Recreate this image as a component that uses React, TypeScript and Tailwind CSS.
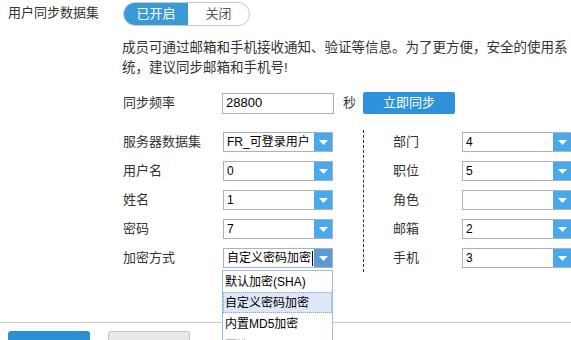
import React from 'react';

const Select = ({ value, active, caret }: { value: string; active?: boolean; caret?: boolean }) => (
  <div className="flex h-5 w-[110px] border border-[#aab0c6] bg-white">
    <div className="flex flex-1 items-center overflow-hidden whitespace-nowrap pl-[3px] text-[12px] leading-[18px] text-black">
      {value}
      {caret && <span className="ml-[1px] inline-block h-[15px] w-px bg-black" />}
    </div>
    <div className={`flex w-[18px] items-center justify-center ${active ? 'bg-[#5b9ad5]' : 'bg-[#4aa9ea]'}`}>
      <svg width="9" height="5" viewBox="0 0 9 5">
        <path d="M0 0h9L4.5 5z" fill="white" />
      </svg>
    </div>
  </div>
);

const Label = ({ text }: { text: string }) => (
  <div className="flex h-5 items-center text-[13px] text-[#333]">{text}</div>
);

const App = () => {
  const left = [
    { label: '服务器数据集', value: 'FR_可登录用户' },
    { label: '用户名', value: '0' },
    { label: '姓名', value: '1' },
    { label: '密码', value: '7' },
    { label: '加密方式', value: '自定义密码加密', active: true },
  ];
  const right = [
    { label: '部门', value: '4' },
    { label: '职位', value: '5' },
    { label: '角色', value: '' },
    { label: '邮箱', value: '2' },
    { label: '手机', value: '3' },
  ];
  const options = ['默认加密(SHA)', '自定义密码加密', '内置MD5加密', '不选'];

  return (
    <div className="relative h-[340px] w-[571px] overflow-hidden bg-white font-['Liberation_Sans','Noto_Sans_CJK_SC',sans-serif] text-[#333]">
      {/* top switch row */}
      <div className="flex h-[26px] items-center pl-2">
        <div className="w-[115px] text-[13px]">用户同步数据集</div>
        <div className="mt-[1px] flex h-6 w-[127px] overflow-hidden rounded-full border border-[#c8c8c8] text-[13px]">
          <div className="flex w-[64px] items-center justify-center bg-[#3a9ad6] text-white">已开启</div>
          <div className="flex flex-1 items-center justify-center text-[#555]">关闭</div>
        </div>
      </div>

      <div className="pl-[122px]">
        <p className="mt-3 text-[13.5px] leading-5 text-[#333]">
          成员可通过邮箱和手机接收通知、验证等信息。为了更方便，安全的使用系
          <br />
          统，建议同步邮箱和手机号!
        </p>

        <div className="mt-[14px] flex h-[22px] items-center pl-px">
          <div className="w-[99px] text-[13px]">同步频率</div>
          <div className="flex h-[21px] w-[112px] items-center border border-[#aab0c6] pl-[3px] text-[13px] text-black">28800</div>
          <div className="ml-[9px] text-[13px]">秒</div>
          <button className="ml-[7px] h-[22px] w-[92px] rounded-[2px] bg-[#2e92da] text-[13px] text-white">立即同步</button>
        </div>

        <div className="mt-[18px] flex pl-px">
          <div className="grid grid-cols-[100px_110px] gap-y-[9px]">
            {left.map((r) => (
              <React.Fragment key={r.label}>
                <Label text={r.label} />
                <Select value={r.value} active={r.active} caret={r.active} />
              </React.Fragment>
            ))}
          </div>
          <div className="ml-[30px] -mt-[2px] -mb-[4px] border-l border-dashed border-[#333]" />
          <div className="grid grid-cols-[69px_110px] gap-y-[9px] pl-[29px]">
            {right.map((r) => (
              <React.Fragment key={r.label}>
                <Label text={r.label} />
                <Select value={r.value} />
              </React.Fragment>
            ))}
          </div>
        </div>
      </div>

      <div className="mt-[54px] border-t border-[#c8c8c8]" />
      <div className="flex pl-2 pt-2">
        <div className="h-[30px] w-[82px] rounded-[3px] bg-[#2b8fd6]" />
        <div className="ml-[18px] h-[30px] w-[82px] rounded-[3px] border border-[#c4c4c4] bg-[#e8e8e8]" />
      </div>

      {/* open dropdown of 加密方式 */}
      <div className="absolute left-[222px] top-[270px] w-[111px] border border-[#9bbde9] bg-white">
        {options.map((o, i) => (
          <div
            key={o}
            className={`flex h-[21px] items-center pl-[2px] text-[12px] ${
              i === 1 ? 'border border-dotted border-[#7ea4dc] bg-[#dde6f5] pl-px text-black' : i === 3 ? 'text-[#bbb]' : 'text-black'
            }`}
          >
            {o}
          </div>
        ))}
      </div>
    </div>
  );
};

export default App;
